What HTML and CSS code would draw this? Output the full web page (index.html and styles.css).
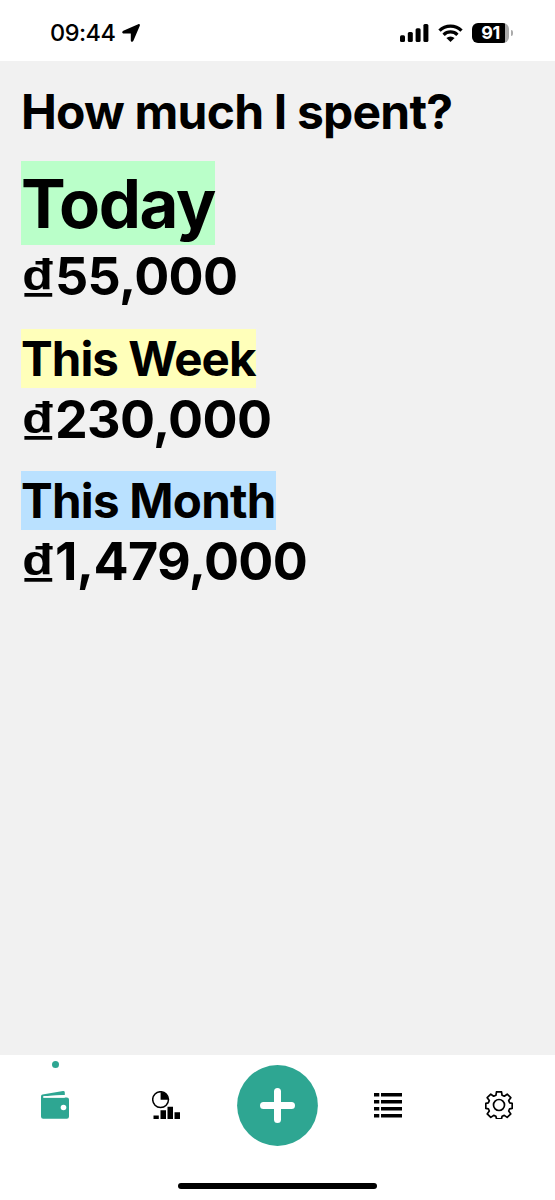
FILE: index.html
```html
<!DOCTYPE html>
<html lang="en">
<head>
    <meta charset="UTF-8">
    <meta name="viewport" content="width=device-width, initial-scale=1.0">
    <title>Spending</title>
    <link rel="stylesheet" href="styles.css">
</head>
<body>
<!-- Status bar -->
<header class="status-bar">
    <div class="status-left">
        <span class="clock">09:44</span>
        <svg class="location" width="18" height="18" viewBox="0 0 18 18">
            <path d="M16.2 .2C17.4-.2 18.2.6 17.8 1.8L11.4 16.8c-.6 1.5-2.6 1.2-2.6-.4V9.4H1.7C-.1 9.4-.3 7.4 1.3 6.7z"/>
        </svg>
    </div>
    <div class="status-right">
        <svg width="29" height="18" viewBox="0 0 29 18">
            <rect x="0" y="11.3" width="5" height="6.7" rx="1.5"/>
            <rect x="7.8" y="8" width="5" height="10" rx="1.5"/>
            <rect x="15.6" y="4.2" width="5" height="13.8" rx="1.5"/>
            <rect x="23.4" y="0" width="5" height="18" rx="1.5"/>
        </svg>
        <svg class="wifi" width="25" height="18" viewBox="0 0 25 18">
            <path d="M1.5 6.7a15.6 15.6 0 0 1 22 0M5.6 10.8a9.8 9.8 0 0 1 13.8 0" fill="none" stroke="#000" stroke-width="3.3"/>
            <path d="M8.4 14.1a6 6 0 0 1 8.2 0L12.5 18z"/>
        </svg>
        <div class="battery">
            <span class="battery-level">91</span>
            <span class="battery-cap"></span>
        </div>
    </div>
</header>

<!-- Spending summary -->
<main class="summary">
    <h1 class="title">How much I spent?</h1>

    <section class="period">
        <h2 class="label today">Today</h2>
        <p class="amount"><span class="currency">₫</span>55,000</p>
    </section>

    <section class="period">
        <h2 class="label week">This Week</h2>
        <p class="amount"><span class="currency">₫</span>230,000</p>
    </section>

    <section class="period">
        <h2 class="label month">This Month</h2>
        <p class="amount"><span class="currency">₫</span>1,479,000</p>
    </section>
</main>

<!-- Bottom navigation -->
<nav class="tab-bar">
    <div class="tabs">
        <a class="tab active">
            <svg width="28" height="28" viewBox="0 0 28 28">
                <path d="M1.5 3.6 22 .1q1.7-.2 1.8 1.4V4L2.7 5.2v1.3h23.1q2.2 0 2.2 2v17q0 2.2-2.2 2.2H2.2Q0 27.7 0 25.5V5.4Q0 3.9 1.5 3.600z"/>
                <path d="M2.2 5.3 23.8 4.1v2.6H2.2z" fill="#fff"/>
                <circle cx="22.5" cy="16.5" r="2.8" fill="#fff"/>
            </svg>
        </a>
        <a class="tab">
            <svg width="28" height="28" viewBox="0 0 28 28">
                <circle cx="8.6" cy="8.6" r="7.9" fill="none" stroke="#000" stroke-width="1.5"/>
                <path d="M8.6 1v7.8h7.8A7.7 7.7 0 0 0 8.6 1zM1.5 24.5h5.3V28H1.5zM8.5 19.3H14V28H8.500zM15.5 15.700H21V28h-5.500zM22.500 21.300H28V28h-5.500z"/>
            </svg>
        </a>
        <a class="tab add">
            <svg class="add-button" width="81" height="81" viewBox="0 0 81 81">
                <circle cx="40.5" cy="40.5" r="40.4"/>
                <path d="M40.5 26.5v28M26.5 40.5h28" stroke="#fff" stroke-width="7" stroke-linecap="round"/>
            </svg>
        </a>
        <a class="tab">
            <svg width="28" height="28" viewBox="0 0 28 28">
                <path d="M0 2h5.3v3.600H0zM7 2h21v3.600H7zM0 9h5.300v3.600H0zM7 9h21v3.600H7zM0 16h5.300v3.600H0zM7 16h21v3.600H7zM0 23h5.300v3.600H0zM7 23h21v3.600H7z"/>
            </svg>
        </a>
        <a class="tab">
            <svg width="28" height="28" viewBox="0 0 28 28" fill="none" stroke="#000" stroke-width="1.7" stroke-linejoin="round">
                <path d="M11.5.8h5l.6 3.5 2.2.9 2.9-2 3.6 3.5-2.1 2.9.9 2.200 2.600.5v5l-2.600.5-.9 2.200 2.100 2.900-3.600 3.500-2.900-2-2.200.9-.6 2.500h-5l-.6-2.500-2.200-.9-2.900 2-3.600-3.500 2.100-2.900-.9-2.200-2.600-.5v-5l2.600-.5.9-2.200-2.100-2.900 3.600-3.500 2.900 2 2.200-.9z"/>
                <circle cx="14" cy="14" r="5.5"/>
            </svg>
        </a>
    </div>
    <div class="home-indicator"></div>
</nav>
</body>
</html>
```
FILE: styles.css
```css
* {
    box-sizing: border-box;
    margin: 0;
    padding: 0;
}

body {
    display: flex;
    flex-direction: column;
    height: 1200px;
    font-family: Inter, 'Liberation Sans', sans-serif;
    color: #000;
    background: #f1f1f1;
    overflow: hidden;
}

svg {
    display: block;
}

/* Status bar */
.status-bar {
    display: flex;
    justify-content: space-between;
    align-items: center;
    height: 61px;
    padding: 5px 42px 0 50px;
    background: #fff;
}

.status-left {
    display: flex;
    align-items: center;
    gap: 7px;
}

.clock {
    font-size: 23.5px;
    font-weight: 550;
    letter-spacing: -0.5px;
    line-height: 28px;
}

.status-right {
    display: flex;
    align-items: center;
    gap: 9px;
}

.battery {
    display: flex;
    align-items: center;
    gap: 2px;
}

.battery-level {
    width: 37px;
    height: 20px;
    border-radius: 6px;
    background: linear-gradient(to right, #000 33.5px, #aaa 33.5px);
    color: #fff;
    font-size: 18px;
    font-weight: 700;
    letter-spacing: -0.4px;
    line-height: 20px;
    text-align: center;
}

.battery-cap {
    width: 2px;
    height: 6px;
    border-radius: 0 2px 2px 0;
    background: #aaa;
}

/* Summary */
.summary {
    flex: 1;
    padding: 22px 21px 0;
}

.title {
    margin-bottom: 20px;
    font-size: 48px;
    font-weight: 700;
    letter-spacing: -0.8px;
    line-height: 58px;
}

.period {
    margin-bottom: 22px;
}

.label {
    width: fit-content;
    padding-top: 1px;
    font-size: 47.5px;
    font-weight: 700;
    line-height: 58px;
}

.today {
    font-size: 67px;
    letter-spacing: -1.4px;
    line-height: 83px;
    background: #baffc9;
}

.week {
    letter-spacing: -0.95px;
    background: #ffffba;
}

.month {
    letter-spacing: -0.75px;
    background: #bae1ff;
}

.amount {
    display: flex;
    height: 62px;
    padding-top: 1px;
    font-size: 52px;
    font-weight: 650;
    letter-spacing: -0.65px;
    line-height: 62px;
}

.week + .amount,
.month + .amount {
    height: 61px;
}

/* The dong sign is stretched to the width and height of the digits */
.currency {
    width: 34px;
    font-family: 'Liberation Sans', sans-serif;
    font-size: 56px;
    font-weight: 700;
    transform: translate(-1px, 4px) scale(1.25, 1.08);
    transform-origin: left;
}

/* Bottom navigation */
.tab-bar {
    display: flex;
    flex-direction: column;
    justify-content: space-between;
    align-items: center;
    height: 145px;
    padding-bottom: 11px;
    background: #fff;
}

.tabs {
    display: grid;
    grid-template-columns: repeat(5, 1fr);
    width: 100%;
    height: 101px;
}

.tab {
    position: relative;
    display: flex;
    justify-content: center;
    align-items: center;
    padding: 0 1px 1px 0;
}

.add {
    padding: 0;
}

.active,
.add-button {
    fill: #2ea692;
}

.active::before {
    content: '';
    position: absolute;
    top: 6px;
    left: 52px;
    width: 7px;
    height: 7px;
    border-radius: 50%;
    background: #2ea692;
}

.home-indicator {
    width: 199px;
    height: 6px;
    border-radius: 3px;
    background: #000;
}
```
